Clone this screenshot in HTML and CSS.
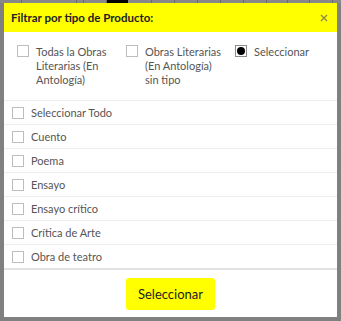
FILE: index.html
```html
<!DOCTYPE html>
<html lang="es">
<head>
<meta charset="utf-8">
<link rel="stylesheet" href="styles.css">
</head>
<body>
<div class="strip">
  <span style="width:22px"></span><span style="width:55px"></span><span style="width:7px"></span><span style="width:23px"></span><span class="dark" style="width:21px"></span><span style="width:24px"></span><span style="width:23px"></span><span style="width:23px"></span><span style="width:23px"></span><span style="width:23px"></span><span style="width:23px"></span><span style="width:21px"></span><span style="width:22px"></span><span style="width:23px"></span><span style="width:23px"></span>
</div>
<div class="modal">
  <div class="header">
    <span class="title">Filtrar por tipo de Producto:</span>
    <svg class="close" width="8" height="8" viewBox="0 0 8 8" aria-label="Cerrar"><path d="M1 1L7 7M7 1L1 7" stroke="#8a8a50" stroke-width="1.4" fill="none"/></svg>
  </div>
  <div class="options">
    <label class="opt"><span class="box"></span><span class="otext">Todas la Obras Literarias (En Antología)</span></label>
    <label class="opt"><span class="box"></span><span class="otext">Obras Literarias (En Antología) sin tipo</span></label>
    <label class="opt"><span class="box radio"><span class="dot"></span></span><span class="otext">Seleccionar</span></label>
  </div>
  <ul class="list">
    <li><span class="box"></span>Seleccionar Todo</li>
    <li><span class="box"></span>Cuento</li>
    <li><span class="box"></span>Poema</li>
    <li><span class="box"></span>Ensayo</li>
    <li><span class="box"></span>Ensayo crítico</li>
    <li><span class="box"></span>Crítica de Arte</li>
    <li><span class="box"></span>Obra de teatro</li>
  </ul>
  <div class="footer">
    <button class="btn">Seleccionar</button>
  </div>
</div>
</body>
</html>
```
FILE: styles.css
```css
html, body {
  margin: 0;
  padding: 0;
  background: #808080;
  font-family: Lato, "Open Sans", sans-serif;
}
.strip {
  height: 3px;
  display: flex;
  overflow: hidden;
}
.strip span {
  flex: none;
  height: 3px;
  background: #888;
  border-right: 1px solid #6a6a6a;
  box-sizing: border-box;
}
.strip span.dark {
  background: #000;
  border-right: none;
}
.modal {
  margin: 0 4px;
  width: 333px;
  height: 314px;
  background: #fff;
  display: flex;
  flex-direction: column;
}
.header {
  height: 29px;
  background: #ffff00;
  display: flex;
  align-items: center;
  justify-content: space-between;
  padding: 0 9px 0 7px;
  flex: none;
}
.title {
  font-size: 11.5px;
  font-weight: bold;
  color: #222;
}
.close {
  display: block;
  margin-top: 1px;
}
.options {
  height: 68px;
  box-sizing: border-box;
  padding: 13px 0 0 13px;
  display: flex;
  flex: none;
}
.opt {
  width: 109px;
  flex: none;
  display: flex;
  align-items: flex-start;
}
.box {
  flex: none;
  width: 12px;
  height: 12px;
  border: 1px solid #bdbdbd;
  box-sizing: border-box;
  background: #fff;
  display: flex;
  align-items: center;
  justify-content: center;
}
.box.radio {
  border-color: #8a8a8a;
}
.dot {
  width: 8px;
  height: 8px;
  border-radius: 50%;
  background: #000;
}
.otext {
  margin-left: 7px;
  margin-top: 0;
  font-size: 11px;
  line-height: 14px;
  color: #555;
  width: 79px;
}
.list {
  list-style: none;
  margin: 0;
  padding: 0;
  flex: none;
  border-bottom: 2px solid #e2e2e2;
}
.list li {
  height: 24px;
  box-sizing: border-box;
  border-top: 1px solid #ececec;
  display: flex;
  align-items: center;
  padding-left: 8px;
  font-size: 11px;
  color: #555;
}
.list li .box {
  margin-right: 7px;
}
.footer {
  flex: 1;
  display: flex;
  justify-content: center;
  align-items: flex-start;
  padding-top: 8px;
}
.btn {
  width: 89px;
  height: 32px;
  border: none;
  border-radius: 3px;
  background: #ffff00;
  color: #222;
  font-family: Lato, "Open Sans", sans-serif;
  font-size: 13px;
  padding: 0;
}
```
